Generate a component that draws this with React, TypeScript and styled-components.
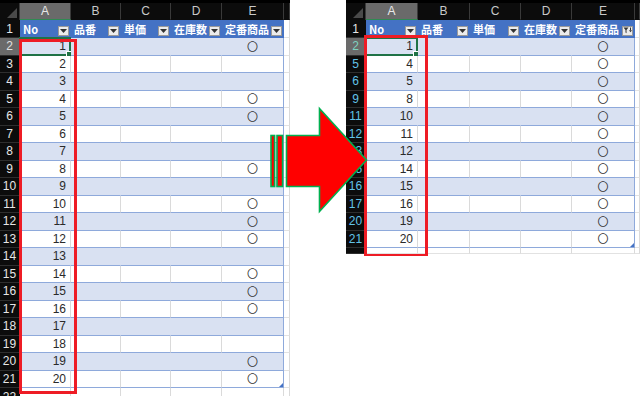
import React from 'react';
import styled, { createGlobalStyle } from 'styled-components';

const GlobalStyle = createGlobalStyle`
  html, body { margin: 0; padding: 0; background: #fff; }
  body { font-family: "Noto Sans CJK JP", "Liberation Sans", sans-serif; }
`;

type Row = { n: number; v: number; mark: boolean };

const LETTERS = ['A', 'B', 'C', 'D', 'E', ''];
const TITLES = ['No', '品番', '単価', '在庫数', '定番商品'];
const MARKED = [1, 4, 5, 8, 10, 11, 12, 14, 15, 16, 19, 20];

const leftRows: Row[] = Array.from({ length: 20 }, (_, i) => ({
  n: i + 2,
  v: i + 1,
  mark: MARKED.includes(i + 1),
}));
const rightRowNums = [2, 5, 6, 9, 11, 12, 13, 15, 16, 17, 20, 21];
const rightRows: Row[] = MARKED.map((v, i) => ({ n: rightRowNums[i], v, mark: true }));

export default function App() {
  return (
    <>
      <GlobalStyle />
      <Stage>
        <Sheet
          cols={[20, 51, 50, 50, 51, 62, 6]}
          rows={leftRows}
          filtered={false}
          height={396}
          tail={17.5}
          box={{ left: 19, top: 36, w: 58, h: 355 }}
        />
        <Sheet
          cols={[20, 52, 52, 51, 51, 63, 5]}
          rows={rightRows}
          filtered
          height={256}
          tail={6}
          box={{ left: 18, top: 32, w: 64, h: 222 }}
        />
        <Arrow viewBox="264 104 108 112" width="108" height="112">
          <rect x="271" y="135.5" width="3.6" height="51" fill="#ff0000" stroke="#00b050" strokeWidth="1.6" />
          <rect x="277" y="135.5" width="5.6" height="51" fill="#ff0000" stroke="#00b050" strokeWidth="1.6" />
          <polygon
            points="286.5,135.5 319.5,135.5 319.5,108.5 366.5,160 319.5,211.5 319.5,186.5 286.5,186.5"
            fill="#ff0000"
            stroke="#00b050"
            strokeWidth="1.6"
          />
        </Arrow>
      </Stage>
    </>
  );
}

type SheetProps = {
  cols: number[];
  rows: Row[];
  filtered: boolean;
  height: number;
  tail: number;
  box: { left: number; top: number; w: number; h: number };
};

function Sheet({ cols, rows, filtered, height, tail, box }: SheetProps) {
  const template = cols.map((c) => `${c}px`).join(' ');
  const width = cols.reduce((a, b) => a + b, 0);
  return (
    <SheetFrame $w={width} $h={height}>
      <SheetRow $cols={template} $h={17}>
        <Corner />
        {LETTERS.map((l, i) => (
          <ColHead key={i} $selected={i === 0}>{l}</ColHead>
        ))}
      </SheetRow>
      <SheetRow $cols={template} $h={18}>
        <RowNum>1</RowNum>
        {TITLES.map((t, i) => (
          <TitleCell key={t}>
            {t}
            <FilterBtn>
              {filtered && i === 4 ? (
                <svg width="9" height="8" viewBox="0 0 9 8">
                  <path d="M0.5 0.5h5l-2 2.6v3.2l-1 -0.8v-2.4z" fill="#333" />
                  <path d="M6 3.2h3l-1.5 2z" fill="#333" />
                  <rect x="7" y="0.5" width="1" height="2.8" fill="#333" />
                </svg>
              ) : (
                <svg width="7" height="4" viewBox="0 0 7 4">
                  <path d="M0 0h7L3.5 4z" fill="#333" />
                </svg>
              )}
            </FilterBtn>
          </TitleCell>
        ))}
        <OuterCell />
      </SheetRow>
      {rows.map((r, idx) => {
        const band = idx % 2 === 0;
        return (
          <SheetRow key={r.n} $cols={template} $h={17.5}>
            <RowNum $selected={idx === 0} $filtered={filtered}>{r.n}</RowNum>
            <DataCell $band={band} $align="right">
              {r.v}
              {idx === 0 && (
                <SelectFrame>
                  <FillHandle />
                </SelectFrame>
              )}
            </DataCell>
            <DataCell $band={band} />
            <DataCell $band={band} />
            <DataCell $band={band} />
            <DataCell $band={band} $align="center" $edge>
              {r.mark && <Mark>〇</Mark>}
              {idx === rows.length - 1 && <ResizeMark />}
            </DataCell>
            <OuterCell />
          </SheetRow>
        );
      })}
      <SheetRow $cols={template} $h={tail}>
        <RowNum $tail={!filtered}>{filtered ? '' : 22}</RowNum>
        {LETTERS.map((l) => (
          <OuterCell key={l} />
        ))}
      </SheetRow>
      <RedBox style={{ left: box.left, top: box.top, width: box.w, height: box.h }} />
    </SheetFrame>
  );
}

const Stage = styled.div`
  position: relative;
  width: 640px;
  height: 396px;
  overflow: hidden;
  display: flex;
  align-items: flex-start;
  gap: 56px;
  background: #fff;
`;

const SheetFrame = styled.div<{ $w: number; $h: number }>`
  position: relative;
  flex: none;
  width: ${(p) => p.$w}px;
  height: ${(p) => p.$h}px;
  overflow: hidden;
  border-top: 3px solid #000;
  box-sizing: border-box;
  background: #fff;
`;

const SheetRow = styled.div<{ $cols: string; $h: number }>`
  display: grid;
  grid-template-columns: ${(p) => p.$cols};
  height: ${(p) => p.$h}px;
`;

const Corner = styled.div`
  position: relative;
  background: #0c0c0c;
  border-right: 1px solid #3a3a3a;
  &::after {
    content: '';
    position: absolute;
    right: 2px;
    bottom: 2px;
    border-style: solid;
    border-width: 0 0 10px 10px;
    border-color: transparent transparent #4a4a4a transparent;
  }
`;

const ColHead = styled.div<{ $selected?: boolean }>`
  display: flex;
  align-items: center;
  justify-content: center;
  background: ${(p) => (p.$selected ? '#6a6a6a' : '#0c0c0c')};
  color: ${(p) => (p.$selected ? '#e8e8e8' : '#c9c9c9')};
  border-right: 1px solid #3a3a3a;
  border-bottom: 1px solid ${(p) => (p.$selected ? '#2f8a52' : '#0c0c0c')};
  font-family: "Liberation Sans", sans-serif;
  font-size: 12px;
  line-height: 1;
`;

const RowNum = styled.div<{ $selected?: boolean; $filtered?: boolean; $tail?: boolean }>`
  display: flex;
  align-items: ${(p) => (p.$tail ? 'flex-start' : 'center')};
  padding-top: ${(p) => (p.$tail ? '3px' : '0')};
  justify-content: center;
  background: ${(p) => (p.$selected ? '#6a6a6a' : '#0c0c0c')};
  color: ${(p) =>
    p.$selected ? (p.$filtered ? '#7ed3c0' : '#e0e0e0') : p.$filtered ? '#62c3e8' : '#e6e6e6'};
  border-bottom: 1px solid #2e2e2e;
  border-right: 1px solid ${(p) => (p.$selected ? '#2f8a52' : '#0c0c0c')};
  font-family: "Liberation Sans", sans-serif;
  font-size: 12px;
  line-height: 1;
  box-sizing: border-box;
`;

const TitleCell = styled.div`
  position: relative;
  display: flex;
  align-items: center;
  padding-left: 3px;
  background: #4472c4;
  color: #fff;
  font-weight: bold;
  font-size: 11px;
  line-height: 1;
  white-space: nowrap;
`;

const FilterBtn = styled.div`
  position: absolute;
  right: 2px;
  bottom: 2px;
  width: 11px;
  height: 10px;
  box-sizing: border-box;
  background: #ececec;
  border: 1px solid #9a9a9a;
  display: flex;
  align-items: center;
  justify-content: center;
`;

const DataCell = styled.div<{ $band?: boolean; $align?: 'right' | 'center'; $edge?: boolean }>`
  position: relative;
  display: flex;
  align-items: center;
  justify-content: ${(p) => (p.$align === 'right' ? 'flex-end' : 'center')};
  padding-right: ${(p) => (p.$align === 'right' ? '4px' : '0')};
  background: ${(p) => (p.$band ? '#d9e1f2' : '#fff')};
  border-bottom: 1px solid #8ea9db;
  border-right: 1px solid ${(p) => (p.$edge ? '#8ea9db' : p.$band ? '#d9e1f2' : '#dadada')};
  box-sizing: border-box;
  color: #2a2a2a;
  font-family: "Liberation Sans", sans-serif;
  font-size: 12px;
  line-height: 1;
`;

const Mark = styled.span`
  font-family: "Noto Sans CJK JP", sans-serif;
  font-size: 11px;
  line-height: 1;
  color: #333;
`;

const OuterCell = styled.div`
  background: #fff;
  border-right: 1px solid #dadada;
  border-bottom: 1px solid #e2e2e2;
  box-sizing: border-box;
`;

const SelectFrame = styled.div`
  position: absolute;
  inset: -1px;
  border: 2px solid #1f7246;
  pointer-events: none;
`;

const FillHandle = styled.div`
  position: absolute;
  right: -4px;
  bottom: -4px;
  width: 5px;
  height: 5px;
  background: #1f7246;
  border: 1px solid #fff;
`;

const ResizeMark = styled.div`
  position: absolute;
  right: 0;
  bottom: 0;
  border-style: solid;
  border-width: 0 0 4px 4px;
  border-color: transparent transparent #4472c4 transparent;
`;

const RedBox = styled.div`
  position: absolute;
  box-sizing: border-box;
  border: 3px solid #ee1c25;
  pointer-events: none;
`;

const Arrow = styled.svg`
  position: absolute;
  left: 264px;
  top: 104px;
`;
